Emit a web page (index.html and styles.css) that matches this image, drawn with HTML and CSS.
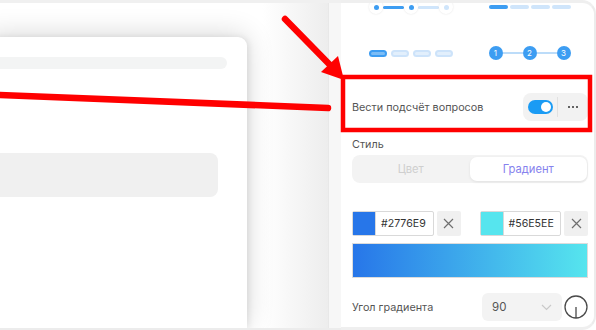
FILE: index.html
```
<!DOCTYPE html>
<html lang="ru">
<head>
<meta charset="utf-8">
<link rel="stylesheet" href="styles.css">
</head>
<body>
<div class="screen">
  <div class="stage">
    <div class="canvas">
      <div class="card">
        <div class="card-bar"></div>
        <div class="card-box"></div>
      </div>
    </div>
    <div class="gutter"></div>
  </div>

  <aside class="panel">
    <div class="steps steps-top">
      <div class="cell">
        <div class="dots-line">
          <span class="halo"><i class="dot on"></i></span>
          <span class="bar on"></span>
          <span class="halo"><i class="dot on"></i></span>
          <span class="bar"></span>
          <span class="halo"><i class="dot"></i></span>
        </div>
      </div>
      <div class="cell">
        <div class="bars">
          <span class="seg on"></span><span class="seg"></span><span class="seg"></span><span class="seg"></span>
        </div>
      </div>
    </div>

    <div class="steps steps-mid">
      <div class="cell">
        <div class="pills">
          <span class="pill on"></span><span class="pill"></span><span class="pill"></span><span class="pill"></span>
        </div>
      </div>
      <div class="cell">
        <div class="nums">
          <span class="num">1</span><span class="link"></span><span class="num">2</span><span class="link"></span><span class="num">3</span>
        </div>
      </div>
    </div>

    <div class="row toggle-row">
      <span class="label">Вести подсчёт вопросов</span>
      <div class="toggle-group">
        <span class="switch"><i class="knob"></i></span>
        <span class="divider"></span>
        <span class="more"><i></i><i></i><i></i></span>
      </div>
    </div>

    <div class="label style-label">Стиль</div>
    <div class="segmented">
      <span class="seg-opt">Цвет</span>
      <span class="seg-opt active">Градиент</span>
    </div>

    <div class="colors">
      <div class="color-item">
        <div class="color-input">
          <span class="swatch swatch-a"></span>
          <span class="hex">#2776E9</span>
        </div>
        <button class="clear" type="button">
          <svg width="11" height="11" viewBox="0 0 11 11"><path d="M1 1L10 10M10 1L1 10" stroke="#6f6f6f" stroke-width="1.2" fill="none"/></svg>
        </button>
      </div>
      <div class="color-item">
        <div class="color-input">
          <span class="swatch swatch-b"></span>
          <span class="hex">#56E5EE</span>
        </div>
        <button class="clear" type="button">
          <svg width="11" height="11" viewBox="0 0 11 11"><path d="M1 1L10 10M10 1L1 10" stroke="#6f6f6f" stroke-width="1.2" fill="none"/></svg>
        </button>
      </div>
    </div>

    <div class="gradient-preview"></div>

    <div class="row angle-row">
      <span class="label">Угол градиента</span>
      <div class="angle-controls">
        <div class="select">
          <span>90</span>
          <svg width="11" height="7" viewBox="0 0 11 7"><path d="M1 1L5.5 5.5L10 1" stroke="#c9c9c9" stroke-width="1.2" fill="none"/></svg>
        </div>
        <svg class="dial" width="24" height="24" viewBox="0 0 24 24"><circle cx="12" cy="12" r="11" stroke="#4a4a4a" stroke-width="1.3" fill="none"/><path d="M12 12V23" stroke="#4a4a4a" stroke-width="1.3"/></svg>
      </div>
    </div>
  </aside>

  <svg class="marks" width="596" height="330" viewBox="0 0 596 330">
    <path d="M-10 94.5L328 108" stroke="#ff0000" stroke-width="6.5" stroke-linecap="round" fill="none"/>
    <path d="M285 19L332 67" stroke="#ff0000" stroke-width="6.5" stroke-linecap="round" fill="none"/>
    <path d="M321 72L338 56L344 80Z" fill="#ff0000"/>
    <rect x="343" y="77" width="247" height="53" stroke="#ff0000" stroke-width="4.5" fill="none"/>
  </svg>
</div>
</body>
</html>
```

FILE: styles.css
```
* { box-sizing: border-box; }
html, body { margin: 0; padding: 0; background: #ffffff; }
body { font-family: Inter, "Noto Sans", "Liberation Sans", sans-serif; }

.screen {
  position: relative;
  display: flex;
  width: 596px;
  height: 330px;
  overflow: hidden;
  background: #ffffff;
}

/* left stage */
.stage {
  width: 341px;
  display: flex;
  border-top: 3px solid #f0f0f0;
  border-bottom: 2px solid #ececec;
}
.canvas {
  flex: 1;
  overflow: hidden;
  padding-top: 34px;
  background: linear-gradient(to right, #ffffff 0%, #ffffff 80%, #ededed 100%);
}
.card {
  width: 260px;
  height: 100%;
  margin-left: -13px;
  background: #ffffff;
  border-radius: 0 9px 0 0;
  box-shadow: 0 -2px 28px rgba(0, 0, 0, 0.16), 2px 0 6px rgba(0, 0, 0, 0.08);
  padding-top: 20px;
}
.card-bar {
  height: 12px;
  margin-right: 20px;
  border-radius: 6px;
  background: #f3f4f4;
}
.card-box {
  height: 44px;
  margin-top: 84px;
  margin-right: 29px;
  border-radius: 8px;
  background: #f0f0f0;
}
.gutter {
  width: 13px;
  background: #f7f7f7;
  border-left: 1px solid #e8e8e8;
}

/* right panel */
.panel {
  width: 255px;
  border-top: 3px solid #efefef;
  border-right: 2px solid #ececec;
  border-bottom: 3px solid #efefef;
  border-radius: 0 14px 14px 0;
  padding: 0 6px 0 11px;
  overflow: hidden;
  background: #ffffff;
}

.steps {
  display: grid;
  grid-template-columns: 1fr 1fr;
}
.cell {
  display: flex;
  justify-content: center;
  align-items: center;
}
.steps-top { height: 10px; margin-top: -3px; }
.steps-mid { height: 14px; margin-top: 36px; }

.dots-line { display: flex; align-items: center; }
.halo {
  width: 14px;
  height: 14px;
  border-radius: 50%;
  background: #fff;
  box-shadow: 0 0 2px rgba(0, 0, 0, 0.12);
  display: flex;
  align-items: center;
  justify-content: center;
  position: relative;
  z-index: 1;
}
.dot { width: 5px; height: 5px; border-radius: 50%; background: #cfe5fb; }
.dot.on { background: #3d9df2; }
.bar { width: 21px; height: 3px; background: #cfe5fb; border-radius: 2px; }
.bar.on { background: #3d9df2; }

.bars { display: flex; gap: 2px; margin-left: 1px; }
.seg { width: 19px; height: 4px; border-radius: 2px; background: #cfe5fb; }
.seg.on { background: #3d9df2; }

.pills { display: flex; gap: 4px; }
.pill {
  width: 18px;
  height: 7px;
  border-radius: 4px;
  background: #e2effc;
  border: 2px solid #cde3fa;
}
.pill.on { background: #7cbdf6; border-color: #3d9df2; }

.nums { display: flex; align-items: center; margin-left: 1px; }
.num {
  width: 14px;
  height: 14px;
  border-radius: 50%;
  background: #3d9df2;
  color: #fff;
  font-size: 8px;
  line-height: 14px;
  text-align: center;
}
.link { width: 20px; height: 2px; background: #bcdcf9; }

.row {
  display: flex;
  align-items: center;
  justify-content: space-between;
}
.label {
  font-size: 10.8px;
  color: #555555;
}
.toggle-row { height: 28px; margin-top: 33px; }
.toggle-group {
  width: 65px;
  height: 28px;
  border-radius: 8px;
  background: #f2f2f2;
  display: flex;
  align-items: center;
  padding-left: 5px;
}
.switch {
  width: 25px;
  height: 14px;
  border-radius: 7px;
  background: #1a9bf4;
  position: relative;
  display: flex;
  align-items: center;
  justify-content: flex-end;
  padding-right: 2px;
}
.knob { width: 10px; height: 10px; border-radius: 50%; background: #fff; }
.divider { width: 1px; height: 20px; background: #e1e1e1; margin-left: 4px; }
.more {
  flex: 1;
  display: flex;
  justify-content: center;
  gap: 2px;
}
.more i { width: 2px; height: 2px; border-radius: 50%; background: #333; }

.style-label { margin-top: 16px; line-height: 16px; }

.segmented {
  margin-top: 2px;
  height: 28px;
  border-radius: 8px;
  background: #f3f3f3;
  display: grid;
  grid-template-columns: 1fr 1fr;
  padding: 2px 1px 2px 0;
}
.seg-opt {
  display: flex;
  align-items: center;
  justify-content: center;
  font-size: 11.2px;
  color: #cfcfcf;
}
.seg-opt.active {
  background: #fff;
  border-radius: 7px;
  color: #8682ee;
  box-shadow: 0 1px 3px rgba(0, 0, 0, 0.08);
}

.colors {
  margin-top: 28px;
  display: grid;
  grid-template-columns: 1fr 1fr;
  gap: 19px;
}
.color-item { display: flex; gap: 3px; height: 25px; }
.color-input {
  flex: 1;
  display: flex;
  align-items: center;
  border: 1px solid #d9d9d9;
  border-radius: 2px;
  background: #fff;
}
.swatch { width: 23px; height: 100%; border-right: 1px solid #d9d9d9; }
.swatch-a { background: #2776e9; }
.swatch-b { background: #56e5ee; }
.hex { font-size: 10.6px; color: #333; margin-left: 5px; }
.clear {
  width: 24px;
  border: 0;
  padding: 0;
  background: #f0f0f0;
  border-radius: 2px;
  display: flex;
  align-items: center;
  justify-content: center;
}

.gradient-preview {
  margin-top: 7px;
  height: 35px;
  border: 1px solid #dcdcdc;
  background: linear-gradient(to right, #2776e9, #56e5ee);
}

.angle-row { margin-top: 15px; height: 28px; }
.angle-controls { display: flex; align-items: center; gap: 2px; }
.select {
  width: 80px;
  height: 28px;
  border-radius: 6px;
  background: #f3f3f3;
  display: flex;
  align-items: center;
  justify-content: space-between;
  padding: 0 10px 0 10px;
  font-size: 11.5px;
  color: #555;
}
.dial { display: block; }

.marks {
  position: absolute;
  left: 0;
  top: 0;
  pointer-events: none;
}
```
